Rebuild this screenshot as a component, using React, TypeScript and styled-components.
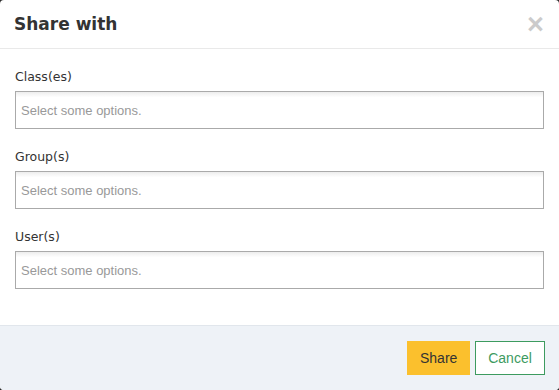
import styled, { createGlobalStyle } from 'styled-components';

const GlobalStyle = createGlobalStyle`
  html, body {
    margin: 0;
    padding: 0;
    background: #2b2b2b;
  }
`;

const fields = ['Class(es)', 'Group(s)', 'User(s)'];

export default function App() {
  return (
    <>
      <GlobalStyle />
      <Modal>
        <Header>
          <Title>Share with</Title>
          <CloseButton aria-label="Close">×</CloseButton>
        </Header>
        <Body>
          {fields.map((label) => (
            <FormGroup key={label}>
              <Label>{label}</Label>
              <MultiSelect>
                <Placeholder>Select some options.</Placeholder>
              </MultiSelect>
            </FormGroup>
          ))}
        </Body>
        <Footer>
          <PrimaryButton>Share</PrimaryButton>
          <OutlineButton>Cancel</OutlineButton>
        </Footer>
      </Modal>
    </>
  );
}

const Modal = styled.div`
  width: 559px;
  height: 390px;
  display: flex;
  flex-direction: column;
  background: #fff;
  border-radius: 4px;
  overflow: hidden;
  box-sizing: border-box;
`;

const Header = styled.div`
  height: 49px;
  box-sizing: border-box;
  padding: 0 15px 0 14px;
  display: flex;
  align-items: center;
  justify-content: space-between;
  border-bottom: 1px solid #e9e9e9;
`;

const Title = styled.h4`
  margin: 0;
  font-family: 'DejaVu Sans', Verdana, sans-serif;
  font-weight: bold;
  font-size: 17px;
  color: #333;
`;

const CloseButton = styled.button`
  border: 0;
  background: none;
  padding: 0;
  margin-top: 1px;
  font-family: 'Liberation Sans', Arial, sans-serif;
  font-size: 29px;
  font-weight: bold;
  line-height: 1;
  color: #000;
  opacity: 0.2;
  cursor: pointer;
`;

const Body = styled.div`
  flex: 1;
  padding: 15px 15px 18px;
  display: flex;
  flex-direction: column;
  gap: 15px;
`;

const FormGroup = styled.div`
  display: flex;
  flex-direction: column;
`;

const Label = styled.label`
  display: block;
  font-family: 'DejaVu Sans', Verdana, sans-serif;
  font-size: 12.5px;
  line-height: 18px;
  padding-top: 4px;
  margin-bottom: 5px;
  color: #333;
`;

const MultiSelect = styled.div`
  height: 38px;
  box-sizing: border-box;
  border: 1px solid #aaa;
  background-image: linear-gradient(#eee 1%, #fff 15%);
  display: flex;
  align-items: center;
  padding: 0 5px;
`;

const Placeholder = styled.span`
  font-family: 'Liberation Sans', Arial, sans-serif;
  font-size: 13px;
  color: #999;
`;

const Footer = styled.div`
  border-top: 1px solid #e1e6ec;
  background: #eef2f7;
  padding: 15px 14px 15px 15px;
  display: flex;
  justify-content: flex-end;
  gap: 5px;
`;

const BaseButton = styled.button`
  height: 34px;
  box-sizing: border-box;
  font-family: 'Liberation Sans', Arial, sans-serif;
  font-size: 14px;
  padding: 0 12px;
  cursor: pointer;
`;

const PrimaryButton = styled(BaseButton)`
  width: 63px;
  border: 1px solid #fbc02d;
  background: #fbc02d;
  color: #333;
`;

const OutlineButton = styled(BaseButton)`
  width: 70px;
  border: 1px solid #3d9b5f;
  background: #fff;
  color: #3d9b5f;
`;
